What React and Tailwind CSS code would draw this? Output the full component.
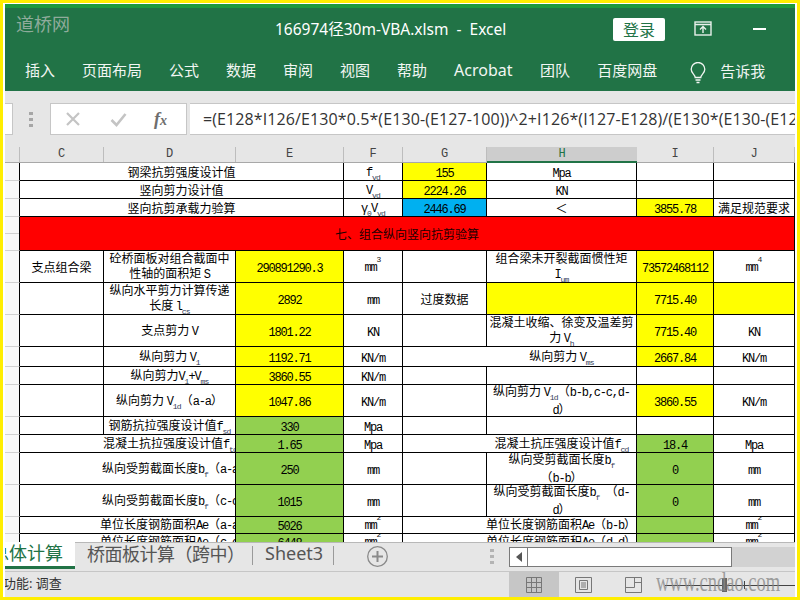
import React from "react";

const CJK = "font-['Noto_Sans','Noto_Sans_CJK_SC',sans-serif]";
const Y = "bg-[#ffff00]";
const G = "bg-[#92d050]";
const B = "bg-[#00b0f0]";

const L = ({ children }) => (
  <span className="font-['Liberation_Mono',monospace] text-[12px] tracking-[-1.2px]">{children}</span>
);
const Sub = ({ children }) => (
  <sub className="font-['Liberation_Mono',monospace] text-[8px] tracking-[-0.8px] leading-none align-[-2px] text-[#333a55]">{children}</sub>
);
const Sup = ({ children }) => (
  <sup className="font-['Liberation_Mono',monospace] text-[8px] leading-none align-[5px] text-[#222]">{children}</sup>
);

const c = (t, bg = "", span = "", extra = "") => ({ t, bg, span, extra });
const n = (t, bg = "") => c(<span className="relative top-[1px]"><L>{t}</L></span>, bg);
const e = () => c(null);

const mm2 = () => c(<><L>mm</L><Sup>2</Sup></>);
const R = ({ children }) => <span className="whitespace-nowrap mr-[-15px]">{children}</span>;
const R13 = ({ children }) => <span className="whitespace-nowrap mr-[-14px]">{children}</span>;
const RIGHT = "justify-end overflow-hidden";
const NOW = ({ children }) => <span className="whitespace-nowrap">{children}</span>;

const rows = [
  [c("钢梁抗剪强度设计值", "", "col-span-3"), c(<><L>f</L><Sub>vd</Sub></>), n("155", Y), n("Mpa"), e(), e()],
  [c("竖向剪力设计值", "", "col-span-3"), c(<><L>V</L><Sub>vd</Sub></>), n("2224.26", Y), n("KN"), e(), e()],
  [c("竖向抗剪承载力验算", "", "col-span-3"), c(<><L>γ</L><Sub>0</Sub><L>V</L><Sub>vd</Sub></>), n("2446.69", B), c("＜"), n("3855.78", Y), c("满足规范要求")],
  [c("七、组合纵向竖向抗剪验算", "bg-[#ff0000]", "col-span-8", "text-[#200000]")],
  [c("支点组合梁"), c(<>砼桥面板对组合截面中<br />性轴的面积矩 <L>S</L></>), n("290891290.3", Y), c(<><L>mm</L><Sup>3</Sup></>), e(), c(<>组合梁未开裂截面惯性矩<br /><L>I</L><Sub>um</Sub></>), n("73572468112", Y), c(<><L>mm</L><Sup>4</Sup></>)],
  [e(), c(<>纵向水平剪力计算传递<br />长度 <L>l</L><Sub>cs</Sub></>), n("2892", Y), n("mm"), c("过度数据"), c(null, Y), n("7715.40", Y), c(null, Y)],
  [e(), c(<>支点剪力 <L>V</L></>), n("1801.22", Y), n("KN"), e(), c(<>混凝土收缩、徐变及温差剪<br />力 <L>V</L><Sub>h</Sub></>), n("7715.40", Y), n("KN")],
  [e(), c(<>纵向剪力 <L>V</L><Sub>1</Sub></>), n("1192.71", Y), n("KN/m"), c(<>纵向剪力 <L>V</L><Sub>ms</Sub></>, "", "col-span-2", "pl-[84px]"), n("2667.84", Y), n("KN/m")],
  [e(), c(<>纵向剪力<L>V</L><Sub>1</Sub><L>+V</L><Sub>ms</Sub></>), n("3860.55", Y), n("KN/m"), e(), e(), e(), e()],
  [e(), c(<>纵向剪力 <L>V</L><Sub>1d</Sub>（<L>a-a</L>）</>), n("1047.86", Y), n("KN/m"), e(), c(<>纵向剪力 <L>V</L><Sub>1d</Sub>（<L>b-b,c-c,d-</L><br /><L>d</L>）</>), n("3860.55", Y), n("KN/m")],
  [e(), c(<NOW>钢筋抗拉强度设计值<L>f</L><Sub>sd</Sub></NOW>), n("330", G), n("Mpa"), e(), e(), e(), e()],
  [c(<R13>混凝土抗拉强度设计值<L>f</L><Sub>td</Sub>　</R13>, "", "col-span-2", RIGHT), n("1.65", G), n("Mpa"), c(<NOW>混凝土抗压强度设计值<L>f</L><Sub>cd</Sub></NOW>, "", "col-span-2", "pl-[84px]"), n("18.4", G), n("Mpa")],
  [c(<R>纵向受剪截面长度<L>b</L><Sub>f</Sub>（<L>a-a</L>）</R>, "", "col-span-2", RIGHT), n("250", G), n("mm"), e(), c(<>纵向受剪截面长度<L>b</L><Sub>f</Sub><br />（<L>b-b</L>）</>), n("0", G), n("mm")],
  [c(<R>纵向受剪截面长度<L>b</L><Sub>f</Sub>（<L>c-c</L>）</R>, "", "col-span-2", RIGHT), n("1015", G), n("mm"), e(), c(<>纵向受剪截面长度<L>b</L><Sub>f</Sub>　（<L>d-</L><br /><L>d</L>）</>), n("0", G), n("mm")],
  [c(<R>单位长度钢筋面积<L>Ae</L>（<L>a-a</L>）</R>, "", "col-span-2", RIGHT), n("5026", G), mm2(), c(<NOW>单位长度钢筋面积<L>Ae</L>（<L>b-b</L>）</NOW>, "", "col-span-2", "justify-end"), c(null, G), mm2()],
  [c(<R>单位长度钢筋面积<L>Ae</L>（<L>c-c</L>）</R>, "", "col-span-2", RIGHT), n("6448", G), mm2(), c(<NOW>单位长度钢筋面积<L>Ae</L>（<L>d-d</L>）</NOW>, "", "col-span-2", "justify-end"), c(null, G), mm2()],
];

const headers = [
  ["C", "w-[84px]"], ["D", "w-[132px]"], ["E", "w-[108px]"], ["F", "w-[59px]"],
  ["G", "w-[84px]"], ["H", "w-[150px]"], ["I", "w-[77px]"], ["J", "w-[81px]"],
];

function Titlebar() {
  return (
    <div className="relative h-[48px] shrink-0 flex items-center text-white bg-[linear-gradient(#1d9a3e_0,#1d9a3e_4px,#217346_4px)]">
      <div className="absolute left-[11px] top-[6px] text-[18px] text-[#8fab9b] font-['Noto_Sans_CJK_SC',serif]">道桥网</div>
      <div className="ml-[270px] w-[240px] pt-[4px] text-[15.5px] whitespace-pre">166974径30m-VBA.xlsm  -  Excel</div>
      <div className="ml-[98px] mt-[3px] w-[52px] h-[23px] bg-white rounded-[2px] flex items-center justify-center text-[16px] text-[#217346]">登录</div>
      <svg className="ml-[29px] mt-[1px]" width="18" height="15" viewBox="0 0 18 15" fill="none" stroke="#e8f0ea" strokeWidth="1.4">
        <rect x="1" y="1" width="16" height="13" />
        <path d="M1 3.5h16M9 12V6M6 8.5l3-3 3 3" />
      </svg>
      <div className="ml-[41px] mt-[2px] w-[13px] h-[1.5px] bg-white" />
    </div>
  );
}

function Ribbon() {
  return (
    <div className="h-[39px] shrink-0 bg-[#217346] flex items-start pl-[20px] gap-[27px] text-[15px] text-[#f2f6f3] leading-[37px]">
      {["插入", "页面布局", "公式", "数据", "审阅", "视图", "帮助"].map((t) => (
        <span key={t} className="whitespace-nowrap">{t}</span>
      ))}
      <span className="w-[59px] text-[16px] whitespace-nowrap">Acrobat</span>
      <span className="whitespace-nowrap">团队</span>
      <span className="whitespace-nowrap">百度网盘</span>
      <svg className="ml-[6px] mt-[10px]" width="16" height="22" viewBox="0 0 16 22" fill="none" stroke="#f2f6f3" strokeWidth="1.3">
        <path d="M5.2 15.5c0-3-4-4-4-8.2a6.8 6.8 0 0 1 13.6 0c0 4.200-4 5.200-4 8.200z" />
        <path d="M5.500 18h5M6.500 20.500h3" />
      </svg>
      <span className="ml-[-13px] pt-[1px] whitespace-nowrap">告诉我</span>
    </div>
  );
}

function FormulaBar() {
  return (
    <div className="h-[56px] shrink-0 bg-[#e6e6e6] pt-[12px] flex items-start">
      <div className="w-[8px] h-[32px] bg-white border border-l-0 border-[#c6c6c6]" />
      <div className="ml-[16px] mt-[9px] w-[4px] flex flex-col gap-[3px]">
        <div className="h-[3px] bg-[#a6a6a6]" /><div className="h-[3px] bg-[#a6a6a6]" /><div className="h-[3px] bg-[#a6a6a6]" />
      </div>
      <div className="ml-[17px] w-[137px] h-[32px] bg-white border border-[#c6c6c6] flex items-center">
        <svg className="ml-[14px]" width="16" height="16" viewBox="0 0 16 16" stroke="#c4c4c4" strokeWidth="2.200" fill="none"><path d="M2 2l12 12M14 2L2 14" /></svg>
        <svg className="ml-[29px]" width="17" height="15" viewBox="0 0 17 15" stroke="#c4c4c4" strokeWidth="2.600" fill="none"><path d="M1.500 8l5 5L15.500 2" /></svg>
        <span className="ml-[27px] font-['Liberation_Serif',serif] italic font-bold text-[18px] leading-none text-[#6e6e6e]">f<span className="text-[14px]">x</span></span>
      </div>
      <div className="ml-[3px] flex-1 h-[32px] bg-white border-y border-[#c6c6c6] pl-[13px] overflow-hidden whitespace-nowrap font-['Open_Sans',sans-serif] text-[16px] tracking-[0.1px] leading-[30px] text-[#333]">
        =(E128*I126/E130*0.5*(E130-(E127-100))^2+I126*(I127-E128)/(E130*(E130-(E127-100))
      </div>
    </div>
  );
}

function Sheet() {
  const mono = "font-['Liberation_Mono',monospace] text-[12px]";
  return (
    <div className="relative flex-1 min-h-0 overflow-hidden bg-white font-['Noto_Sans_CJK_SC',sans-serif] text-[12px] leading-[15px] text-black">
      <div className={`flex h-[16px] bg-[#e6e6e6] border-b border-[#a8a8a8] ${mono} text-[#444]`}>
        <div className="w-[15px] shrink-0 border-r border-[#bdbdbd]" />
        {headers.map(([h, w]) =>
          h === "H" ? (
            <div key={h} className={`${w} shrink-0 h-[16px] flex items-center justify-center bg-[#cdcdcd] border-b-2 border-[#217346] text-[#217346]`}>{h}</div>
          ) : (
            <div key={h} className={`${w} shrink-0 flex items-center justify-center border-r border-[#bdbdbd]`}>{h}</div>
          )
        )}
      </div>
      <div className="grid grid-cols-[15px_84px_132px_108px_59px_84px_150px_77px_81px] grid-rows-[18px_18px_18px_34px_32px_32px_32px_20px_18px_32px_18px_18px_32px_32px_17px_17px]">
        {rows.map((r, i) => (
          <React.Fragment key={i}>
            <div className="relative bg-[#f8f8f8] border-r border-b border-r-black border-b-[#d0d0d0]">
              {i === 3 && <div className="absolute left-0 right-0 top-[16px] h-[1px] bg-[#d0d0d0]" />}
            </div>
            {r.map((x, j) => {
              const end = x.extra.includes("justify-end");
              return (
                <div key={j} className={`${x.span} ${x.bg} ${x.extra} flex items-center ${end ? "" : "justify-center text-center"} border-r border-b border-black min-w-0 overflow-hidden`}>
                  {end ? x.t : <div className="min-w-0">{x.t}</div>}
                </div>
              );
            })}
          </React.Fragment>
        ))}
      </div>
    </div>
  );
}

function Tabs() {
  return (
    <div className="h-[29px] shrink-0 flex bg-[#e6e6e6] border-t border-[#b8b8b8] text-[18px]">
      <div className="w-[70px] shrink-0 -mt-[1px] h-[27px] bg-white border-b-[3px] border-[#217346] overflow-hidden relative text-[#217346]">
        <span className="absolute left-[-14px] top-[-1px] leading-[24px] whitespace-nowrap">总体计算</span>
      </div>
      <div className="ml-[12px] w-[147px] leading-[22px] tracking-[-0.5px] text-[#555] whitespace-nowrap">桥面板计算（跨中）</div>
      <div className="ml-[18px] mt-[3px] w-[1px] h-[19px] bg-[#9a9a9a]" />
      <div className="ml-[12px] w-[55px] leading-[20px] text-[#555]">Sheet3</div>
      <div className="ml-[13px] mt-[3px] w-[1px] h-[19px] bg-[#9a9a9a]" />
      <svg className="ml-[33px] mt-[3px]" width="21" height="21" viewBox="0 0 21 21" fill="none" stroke="#8a8a8a">
        <circle cx="10.500" cy="10.500" r="9.800" strokeWidth="1.300" />
        <path d="M10.500 5v11M5 10.500h11" strokeWidth="2" />
      </svg>
      <div className="ml-[102px] mt-[6px] w-[4px] flex flex-col gap-[3px]">
        <div className="h-[3px] bg-[#b4b4b4]" /><div className="h-[3px] bg-[#b4b4b4]" /><div className="h-[3px] bg-[#b4b4b4]" />
      </div>
      <div className="ml-[15px] mt-[4px] w-[223px] h-[20px] bg-white border border-[#7a7a7a] flex">
        <div className="w-[18px] border-r border-[#7a7a7a] flex items-center justify-center">
          <svg width="6" height="10" viewBox="0 0 6 10"><path d="M6 0v10L0 5z" fill="#555" /></svg>
        </div>
      </div>
      <div className="mt-[4px] flex-1 h-[20px] bg-[#d2d2d2]" />
    </div>
  );
}

function Status() {
  return (
    <div className="relative h-[26px] shrink-0 flex bg-[#e6e6e6] border-t border-[#c6c6c6] text-[13px] text-[#333]">
      <div className="w-[60px] overflow-hidden relative">
        <span className="absolute left-[-28px] top-[2px] whitespace-nowrap">辅助功能: 调查</span>
      </div>
      <div className="ml-[444px] w-[50px] bg-[#c6c6c6] flex items-center justify-center">
        <svg width="16" height="16" viewBox="0 0 16 16" fill="none" stroke="#777"><path d="M.5.500h15v15H.500zM5.500.500v15M10.500.500v15M.500 5.500h15M.500 10.500h15" /></svg>
      </div>
      <svg className="ml-[16px] mt-[5px]" width="17" height="16" viewBox="0 0 17 16" fill="none" stroke="#777"><path d="M.5.500h16v15H.500zM4.500 3.500h8v9h-8zM6 6h5M6 8h5M6 10h5" /></svg>
      <svg className="ml-[33px] mt-[5px]" width="17" height="16" viewBox="0 0 17 16" fill="none" stroke="#777"><path d="M.5.500h16v15H.500zM.500 10.500h9V.500M9.500 5.500h7" /></svg>
      <div className="absolute left-[660px] right-0 top-[13px] h-[1px] bg-[#444]" />
      <div className="absolute left-[717px] top-[6px] w-[5px] h-[14px] bg-[#666]" />
      <div className="absolute left-[739px] top-[9px] w-[1px] h-[8px] bg-[#444]" />
      <div className="absolute left-[651px] top-[-4px] font-['Liberation_Serif',serif] text-[18.5px] leading-none origin-top scale-y-150 text-[#8a8a8a] opacity-80 whitespace-nowrap">www.cndao.com</div>
    </div>
  );
}

export default function App() {
  return (
    <div className={`w-[800px] h-[600px] overflow-hidden bg-[#ffee00] pl-[3px] pr-[3px] pt-[3px] pb-[3px] ${CJK}`}>
      <div className="w-[794px] h-[594px] bg-white pl-[2px] pr-[2px] pt-[1px] flex flex-col overflow-hidden">
        <Titlebar />
        <Ribbon />
        <FormulaBar />
        <Sheet />
        <Tabs />
        <Status />
      </div>
    </div>
  );
}
